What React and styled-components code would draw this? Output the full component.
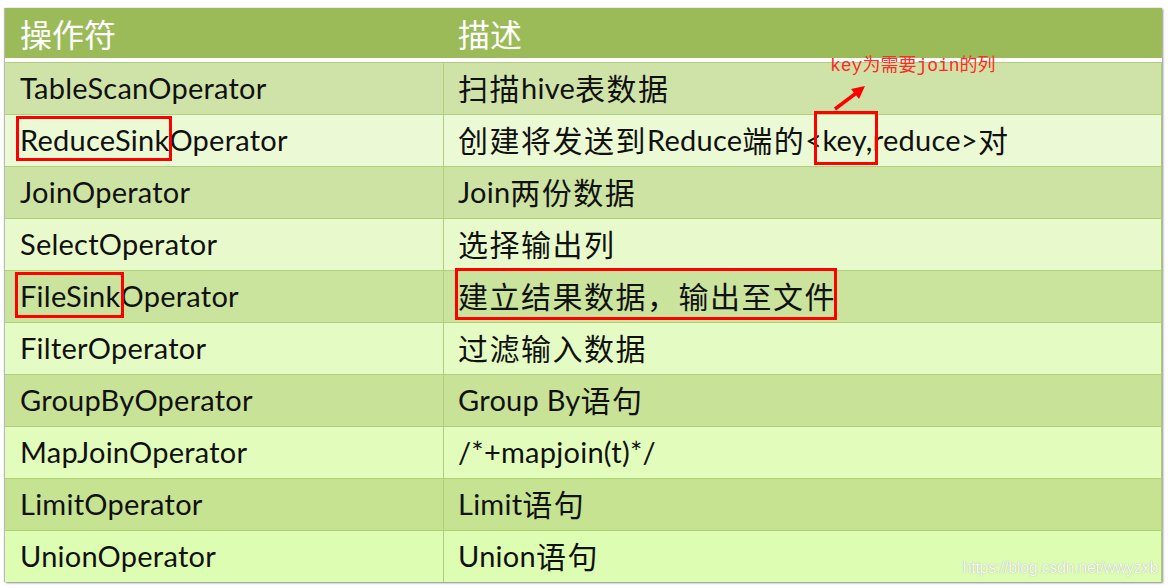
import React from 'react';
import styled, { createGlobalStyle } from 'styled-components';

const GlobalStyle = createGlobalStyle`
  html, body {
    margin: 0;
    padding: 0;
    background: #ffffff;
  }
  body {
    font-family: "Lato", "Noto Sans CJK SC", sans-serif;
  }
`;

const LATIN = '"Lato", "Noto Sans CJK SC", sans-serif';
const CJK = '"Noto Sans CJK SC", "Noto Sans", sans-serif';

const ODD_TOP = [207, 227, 169];
const ODD_BOTTOM = [196, 227, 142];
const EVEN_TOP = [237, 249, 216];
const EVEN_BOTTOM = [221, 253, 179];

const mix = (a, b, t) =>
  `rgb(${a.map((v, i) => Math.round(v + (b[i] - v) * t)).join(',')})`;

const rowColor = index => {
  const t = index / 9;
  return index % 2 === 0 ? mix(ODD_TOP, ODD_BOTTOM, t) : mix(EVEN_TOP, EVEN_BOTTOM, t);
};

const Page = styled.div`
  padding: 8px 0 0 5px;
  width: 1168px;
  height: 588px;
  box-sizing: border-box;
`;

const Table = styled.div`
  position: relative;
  width: 1157px;
  display: grid;
  grid-template-columns: 439px 1fr;
  background: #ffffff;
  box-shadow: 1px 1px 2px rgba(0, 0, 0, 0.45), -1px 0 1px rgba(0, 0, 0, 0.25);
`;

const HeadCell = styled.div`
  height: 50px;
  margin-bottom: 4px;
  background: #9bbb59;
  color: #ffffff;
  font-family: ${CJK};
  font-size: 32px;
  line-height: 50px;
  padding-left: ${({ $first }) => ($first ? '15px' : '14px')};
  box-sizing: border-box;
`;

const Cell = styled.div`
  height: 52px;
  display: flex;
  align-items: center;
  box-sizing: border-box;
  padding: 0 0 3px ${({ $first }) => ($first ? '15px' : '14px')};
  border-top: 1px solid #afd07a;
  border-right: ${({ $first }) => ($first ? '1px solid #afd07a' : '1px solid #a8cc6f')};
  color: #111111;
  font-family: ${LATIN};
  font-size: 29px;
  letter-spacing: 0.25px;
  white-space: nowrap;
`;

const Han = styled.span`
  font-family: ${CJK};
  font-size: 30px;
  letter-spacing: 1.5px;
`;

const Mark = styled.span`
  position: relative;

  &::after {
    content: '';
    position: absolute;
    left: ${({ $l }) => $l}px;
    right: ${({ $r }) => $r}px;
    top: ${({ $t }) => $t}px;
    bottom: ${({ $b }) => $b}px;
    border: 3px solid #ff0000;
    pointer-events: none;
  }
`;

const Note = styled.div`
  position: absolute;
  left: 825px;
  top: 47px;
  color: #ff2a2a;
  font-family: "Liberation Mono", "Noto Sans CJK SC", monospace;
  font-size: 18px;
  line-height: 22px;
  white-space: nowrap;
`;

const Arrow = styled.svg`
  position: absolute;
  left: 818px;
  top: 67px;
`;

const Watermark = styled.div`
  position: absolute;
  right: 4px;
  bottom: 5px;
  color: rgba(255, 255, 255, 0.95);
  font-family: "Liberation Sans", sans-serif;
  font-size: 16px;
  letter-spacing: -0.3px;
  text-shadow: 0 0 1px rgba(120, 120, 120, 0.7);
`;

const Text = ({ value }) =>
  value
    .split(/([\u3000-\u9fff\uff00-\uffef]+)/)
    .filter(Boolean)
    .map((part, i) =>
      /[\u3000-\u9fff\uff00-\uffef]/.test(part) ? <Han key={i}>{part}</Han> : part
    );

const rows = [
  ['TableScanOperator', <Text value="扫描hive表数据" />],
  [
    <>
      <Mark $l={-4} $r={-3} $t={-6} $b={-4}>ReduceSink</Mark>Operator
    </>,
    <>
      <Text value="创建将发送到Reduce端的<" />
      <Mark $l={-8} $r={-5} $t={-11} $b={-8}>key,</Mark>reduce&gt;<Text value="对" />
    </>,
  ],
  ['JoinOperator', <Text value="Join两份数据" />],
  ['SelectOperator', <Text value="选择输出列" />],
  [
    <>
      <Mark $l={-5} $r={-3} $t={-6} $b={-5}>FileSink</Mark>Operator
    </>,
    <Mark $l={-3} $r={-1} $t={-5} $b={-3}>
      <Text value="建立结果数据，输出至文件" />
    </Mark>,
  ],
  ['FilterOperator', <Text value="过滤输入数据" />],
  ['GroupByOperator', <Text value="Group By语句" />],
  ['MapJoinOperator', '/*+mapjoin(t)*/'],
  ['LimitOperator', <Text value="Limit语句" />],
  ['UnionOperator', <Text value="Union语句" />],
];

const App = () => (
  <Page>
    <GlobalStyle />
    <Table>
      <HeadCell $first>操作符</HeadCell>
      <HeadCell>描述</HeadCell>
      {rows.map(([name, desc], i) => (
        <React.Fragment key={i}>
          <Cell $first style={{ background: rowColor(i) }}>
            {name}
          </Cell>
          <Cell style={{ background: rowColor(i) }}>{desc}</Cell>
        </React.Fragment>
      ))}
      <Note>key为需要join的列</Note>
      <Arrow width="50" height="40" viewBox="0 0 50 40">
        <line x1="12" y1="34" x2="36" y2="16" stroke="#ff0000" strokeWidth="3.5" />
        <polygon points="42,11 28,14 36,24" fill="#ff0000" />
      </Arrow>
      <Watermark>https://blog.csdn.net/wwyzxb</Watermark>
    </Table>
  </Page>
);

export default App;
